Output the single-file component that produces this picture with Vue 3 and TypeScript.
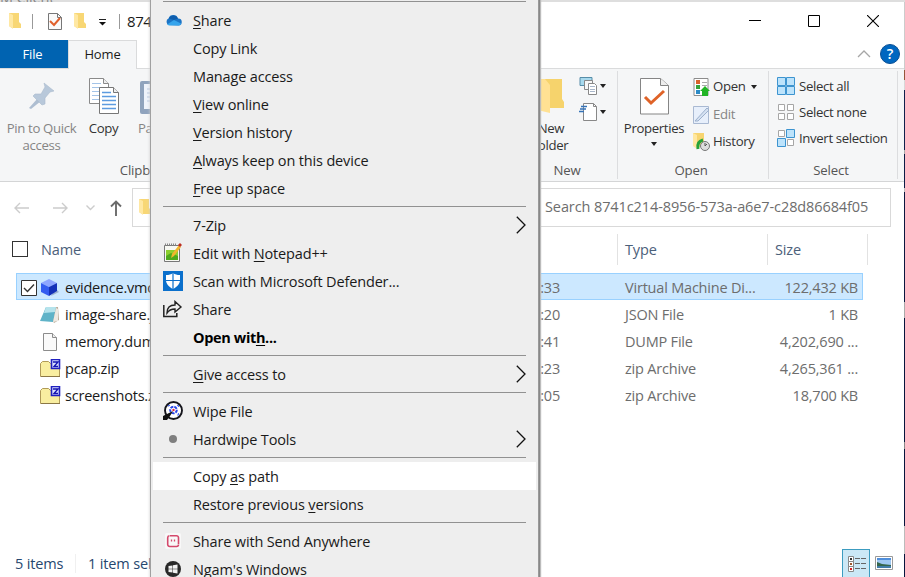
<script setup lang="ts">
type MenuEntry =
  | { kind: 'line' }
  | { kind: 'item'; before?: string; key?: string; after?: string; icon?: string; sub?: boolean; bold?: boolean; hot?: boolean }

interface FileRow {
  name: string
  time: string
  type: string
  size: string
  icon: 'cube' | 'note' | 'page' | 'zip'
  selected?: boolean
}

const line: MenuEntry = { kind: 'line' }

const menu: MenuEntry[] = [
  line,
  { kind: 'item', key: 'S', after: 'hare', icon: 'cloud' },
  { kind: 'item', before: 'Copy Link' },
  { kind: 'item', before: 'Manage access' },
  { kind: 'item', key: 'V', after: 'iew online' },
  { kind: 'item', key: 'V', after: 'ersion history' },
  { kind: 'item', key: 'A', after: 'lways keep on this device' },
  { kind: 'item', key: 'F', after: 'ree up space' },
  line,
  { kind: 'item', before: '7-Zip', sub: true },
  { kind: 'item', before: 'Edit with ', key: 'N', after: 'otepad++', icon: 'notepad' },
  { kind: 'item', before: 'Scan with Microsoft Defender...', icon: 'shield' },
  { kind: 'item', before: 'Share', icon: 'share' },
  { kind: 'item', before: 'Open wit', key: 'h', after: '...', bold: true },
  line,
  { kind: 'item', key: 'G', after: 'ive access to', sub: true },
  line,
  { kind: 'item', before: 'Wipe File', icon: 'wipe' },
  { kind: 'item', before: 'Hardwipe Tools', icon: 'dot', sub: true },
  line,
  { kind: 'item', before: 'Copy ', key: 'a', after: 's path', hot: true },
  { kind: 'item', before: 'Restore previous ', key: 'v', after: 'ersions' },
  line,
  { kind: 'item', before: 'Share with Send Anywhere', icon: 'send' },
  { kind: 'item', before: "Ngam's Windows", icon: 'windows' },
]

const files: FileRow[] = [
  { name: 'evidence.vmdk', time: '16:33', type: 'Virtual Machine Di...', size: '122,432 KB', icon: 'cube', selected: true },
  { name: 'image-share.json', time: '17:20', type: 'JSON File', size: '1 KB', icon: 'note' },
  { name: 'memory.dump', time: '19:41', type: 'DUMP File', size: '4,202,690 ...', icon: 'page' },
  { name: 'pcap.zip', time: '17:23', type: 'zip Archive', size: '4,265,361 ...', icon: 'zip' },
  { name: 'screenshots.zip', time: '17:05', type: 'zip Archive', size: '18,700 KB', icon: 'zip' },
]
</script>

<template>
  <div class="screen">
    <div class="behind"><span>M Client</span></div>
    <div class="window">
      <header class="titlebar">
        <svg class="tb-folder" width="14" height="18" viewBox="0 0 14 18"><path d="M1 1h10v9l2 2v4H4l-3-2z" fill="#f8d775" /><path d="M1 1l4 2v14l-4-3z" fill="#ffe8a3" /></svg>
        <i class="tick first" />
        <svg class="tb-check" width="16" height="19" viewBox="0 0 16 19"><path d="M1.500 1.500h9l4 4v12h-13z" fill="#fafafa" stroke="#777" /><path d="M10.500 1.500v4h4" fill="none" stroke="#777" /><path d="M3 9l4 4 6-7" fill="none" stroke="#e0602c" stroke-width="2" /></svg>
        <svg class="tb-folder second" width="14" height="18" viewBox="0 0 14 18"><path d="M1 1h10v9l2 2v4H4l-3-2z" fill="#f8d775" /><path d="M1 1l4 2v14l-4-3z" fill="#ffe8a3" /></svg>
        <svg class="tb-more" width="9" height="8" viewBox="0 0 9 8"><path d="M1 .500h7" stroke="#222" /><path d="M1 3h7L4.500 6.500z" fill="#111" /></svg>
        <i class="tick last" />
        <span class="title">8741c214</span>
        <div class="controls">
          <svg width="12" height="12" viewBox="0 0 12 12"><path d="M0 5.500h12" stroke="#000" /></svg>
          <svg width="12" height="12" viewBox="0 0 12 12"><path d="M.5.500h11v11H.5z" fill="none" stroke="#000" /></svg>
          <svg width="12" height="12" viewBox="0 0 12 12"><path d="M0 0l12 12M12 0L0 12" stroke="#000" stroke-width="1.100" /></svg>
        </div>
      </header>

      <nav class="tabs">
        <span class="tab file">File</span>
        <span class="tab home">Home</span>
        <svg class="fold" width="14" height="8" viewBox="0 0 14 8"><path d="M1 7l6-6 6 6" fill="none" stroke="#a6a6a6" stroke-width="1.300" /></svg>
        <span class="help">?</span>
      </nav>

      <section class="ribbon">
        <div class="group clipboard">
          <div class="big pin">
            <svg width="28" height="28" viewBox="0 0 28 28"><path d="M1 26l9-10 3 3-10 8z" fill="#aebed1" /><path d="M16 1l10 8-4 1-5 6 0 6-3 1L5 14l2-2 6 0 4-7z" fill="#b8c8da" stroke="#a9bacd" stroke-width=".6" /></svg>
            <span class="muted">Pin to Quick<br />access</span>
          </div>
          <div class="big copy">
            <svg width="32" height="38" viewBox="0 0 32 38"><path d="M1.500 1.500h14l5 5v20h-19z" fill="#fff" stroke="#8a8a8a" /><path d="M15.500 1.500v5h5" fill="#eee" stroke="#8a8a8a" /><path d="M4 6.500h9M4 10.500h14M4 14.500h14M4 18.500h14M4 22.500h14" stroke="#a4c4e8" /><path d="M11.500 10.500h14l5 5v21h-19z" fill="#fff" stroke="#777" /><path d="M25.500 10.500v5h5" fill="#eee" stroke="#777" /><path d="M14 15.500h9M14 19.500h14M14 23.500h14M14 27.500h14M14 31.500h14" stroke="#5c9be0" stroke-width="1.300" /></svg>
            <span>Copy</span>
          </div>
          <div class="big paste">
            <svg width="32" height="36" viewBox="0 0 32 36"><rect x="0" y="2" width="31" height="33" rx="2" fill="#8fa3bd" /><path d="M4 5h23v25H4z" fill="#eef3fb" /><path d="M7 10h17M7 14h17M7 18h17M7 22h17" stroke="#b9c9e0" /></svg>
            <span class="muted">Paste</span>
          </div>
          <span class="caption">Clipboard</span>
        </div>
        <div class="group new">
          <div class="big folder">
            <svg width="40" height="36" viewBox="0 0 40 36"><path d="M2 1h33v20l2 3v6H8z" fill="#f6d36c" /><path d="M2 1h16l5 6v28L2 30z" fill="#ffe193" /></svg>
            <span>New<br />folder</span>
          </div>
          <div class="mini">
            <span><svg width="19" height="19" viewBox="0 0 19 19"><path d="M1 1.500h12v8H1z" fill="#a8d9ed" stroke="#568da8" /><path d="M5.500 4.500h8v9h-8z" fill="#f7f7f7" stroke="#888" /><path d="M9.500 7.500h6l2 2v9h-8z" fill="#fff" stroke="#888" /><path d="M11 10.500h5M11 13.500h5M11 15.500h5" stroke="#a9b7ca" /></svg><i class="caret" /></span>
            <span><svg width="19" height="19" viewBox="0 0 19 19"><path d="M4.500 1.500h10l3 3v14h-13z" fill="#fff" stroke="#888" /><path d="M14.500 1.500v3h3" fill="none" stroke="#888" /><path d="M2 4.500h6M1 7h6M0 9.500h5" stroke="#3673b8" stroke-width="1.400" /></svg><i class="caret" /></span>
          </div>
          <span class="caption">New</span>
        </div>
        <div class="group open">
          <div class="big props">
            <svg width="29" height="37" viewBox="0 0 29 37"><path d="M.5.500h20l8 7v28.500H.5z" fill="#fff" stroke="#858585" /><path d="M20.500.500v7h8" fill="#eee" stroke="#858585" /><path d="M5 19l6 6L24 13" fill="none" stroke="#df6328" stroke-width="3" /></svg>
            <span>Properties</span>
            <i class="caret" />
          </div>
          <div class="list">
            <span><svg width="17" height="20" viewBox="0 0 17 20"><path d="M1 1.500h14v17H1z" fill="#fff" stroke="#8c8c8c" /><path d="M3 3h4v4H3z" fill="#d9622b" /><path d="M3 8h4v4H3z" fill="#35a23a" /><path d="M3 13h4v4H3z" fill="#2b8ac6" /><path d="M9 5.500h5M9 8.500h5" stroke="#aaa" /><path d="M12 9l5 5h-2v5H9v-5H7z" fill="#21b425" /></svg>Open<i class="caret" /></span>
            <span class="muted"><svg width="17" height="19" viewBox="0 0 17 19"><path d="M.5 1.500h15v17H.5z" fill="#e7effb" stroke="#a9b9d2" /><path d="M2 16L14 3l2 2L5 16z" fill="#d5e1f1" stroke="#9db1cd" /></svg>Edit</span>
            <span><svg width="17" height="20" viewBox="0 0 17 20"><path d="M0 1h11v14H4l-4-2z" fill="#f7d470" /><path d="M0 1l4 2v14l-4-3z" fill="#ffe7a0" /><path d="M5 17c-1-5 1-8 5-9" fill="none" stroke="#24a33a" stroke-width="3" /><circle cx="12" cy="14" r="4.500" fill="#ddd" stroke="#777" /><path d="M12 11v3l2-2" fill="none" stroke="#555" /></svg>History</span>
          </div>
          <span class="caption">Open</span>
        </div>
        <div class="group select">
          <div class="list">
            <span><svg width="18" height="18" viewBox="0 0 18 18"><path d="M.5.500h8v8h-8zM9.500.500h8v8h-8zM.5 9.500h8v8h-8zM9.500 9.500h8v8h-8z" fill="#bde3fb" stroke="#3d94d0" /></svg>Select all</span>
            <span><svg width="18" height="18" viewBox="0 0 18 18"><path d="M1.500 1.500h6v6h-6zM10.500 1.500h6v6h-6zM1.500 10.500h6v6h-6zM10.500 10.500h6v6h-6z" fill="#fff" stroke="#a6a6a6" /></svg>Select none</span>
            <span><svg width="18" height="18" viewBox="0 0 18 18"><path d="M1.500 1.500h6v6h-6zM10.500 10.500h6v6h-6z" fill="#fff" stroke="#a6a6a6" /><path d="M9.500.500h8v8h-8zM.5 9.500h8v8h-8z" fill="#bde3fb" stroke="#3d94d0" /></svg>Invert selection</span>
          </div>
          <span class="caption">Select</span>
        </div>
      </section>

      <div class="address">
        <svg class="back" width="15" height="12" viewBox="0 0 15 12"><path d="M15 6H1M6 1L1 6l5 5" fill="none" stroke="#ccc" stroke-width="1.400" /></svg>
        <svg class="fwd" width="15" height="12" viewBox="0 0 15 12"><path d="M0 6h14M9 1l5 5-5 5" fill="none" stroke="#ccc" stroke-width="1.400" /></svg>
        <svg class="recent" width="9" height="6" viewBox="0 0 9 6"><path d="M.5.500l4 4 4-4" fill="none" stroke="#ccc" stroke-width="1.400" /></svg>
        <svg class="up" width="12" height="16" viewBox="0 0 12 16"><path d="M6 16V1.500M1 6.500l5-5 5 5" fill="none" stroke="#6b6b6b" stroke-width="1.900" /></svg>
        <div class="path"><svg width="14" height="18" viewBox="0 0 14 18"><path d="M1 1h10v9l2 2v4H4l-3-2z" fill="#f8d775" /><path d="M1 1l4 2v14l-4-3z" fill="#ffe8a3" /></svg></div>
        <div class="search">Search 8741c214-8956-573a-a6e7-c28d86684f05</div>
      </div>

      <div class="heads">
        <i class="box" />
        <span class="h-name">Name</span>
        <span class="h-date">Date modified</span>
        <span class="h-type">Type</span>
        <span class="h-size">Size</span>
      </div>

      <main class="files">
        <div v-for="f in files" :key="f.name" class="row" :class="{ selected: f.selected }">
          <span class="pick"><svg v-if="f.selected" width="16" height="16" viewBox="0 0 16 16"><path d="M.5.500h15v15H.5z" fill="#fff" stroke="#333" /><path d="M3 8l3.500 3.500L13 4.500" fill="none" stroke="#333" stroke-width="1.400" /></svg></span>
          <span class="icon">
            <svg v-if="f.icon === 'cube'" width="20" height="20" viewBox="0 0 20 20"><path d="M11 18l8-4-3-3z" fill="#9ab0cf" /><path d="M9 1l8 4-8 4-8-4z" fill="#8ea6ff" /><path d="M1 5l8 4v9l-8-4z" fill="#345cf0" /><path d="M17 5L9 9v9l8-5z" fill="#1431b8" /></svg>
            <svg v-else-if="f.icon === 'note'" width="20" height="18" viewBox="0 0 20 18"><path d="M6 2l12-1 1 13-5 3z" fill="#b8aa98" /><path d="M6 1h10l-3 15-13-1z" fill="#5fb3c8" /><path d="M6 1h10l-1 5L4 7z" fill="#b5e3ec" /><path d="M16 2l2 1v12l-5 1z" fill="#eee9e2" /></svg>
            <svg v-else-if="f.icon === 'page'" width="20" height="20" viewBox="0 0 20 20"><path d="M3.500 1.500h9l4 4v13h-13z" fill="#fafafa" stroke="#8c8c8c" /><path d="M12.500 1.500v4h4" fill="#eee" stroke="#8c8c8c" /></svg>
            <svg v-else width="21" height="19" viewBox="0 0 21 19"><path d="M.5 17.500v-13l2-2h6l2 2h9v13z" fill="#f9eea0" stroke="#b09a58" /><path d="M1 17.500h19" stroke="#8b7746" /><path d="M11.500.500h8v9h-8z" fill="#dce2ff" stroke="#2020c0" stroke-width="1.600" /><path d="M13 3h5l-4 4.500h4" fill="none" stroke="#1414b0" stroke-width="1.400" /></svg>
          </span>
          <span class="name">{{ f.name }}</span>
          <span class="time">{{ f.time }}</span>
          <span class="type">{{ f.type }}</span>
          <span class="size">{{ f.size }}</span>
        </div>
      </main>

      <footer class="status">
        <span class="count">5 items</span>
        <span class="chosen">1 item selected</span>
        <div class="view on"><svg width="19" height="18" viewBox="0 0 19 18"><path d="M1.500 1.500h5v5h-5zM1.500 6.500h5v5h-5zM1.500 11.500h5v5h-5z" fill="#fff" stroke="#888" /><path d="M3 3h2v2H3z" fill="#333" /><path d="M3 8h2v2H3z" fill="#a05b30" /><path d="M3 13h2v2H3z" fill="#d02020" /><path d="M8 3.500h5M14 3.500h5M8 8.500h5M14 8.500h5M8 13.500h5M14 13.500h5" stroke="#666" /></svg></div>
        <div class="view"><svg width="18" height="14" viewBox="0 0 18 14"><path d="M.5.500h17v13H.5z" fill="#fff" stroke="#999" /><path d="M2 2h14v10H2z" fill="#9fc8f2" /><path d="M2 2h14v2H2z" fill="#4f8edb" /><path d="M2 6l5 2 9 1v1H2z" fill="#35664c" /><path d="M2 10h14v2H2z" fill="#417ca8" /></svg></div>
      </footer>
    </div>
    <div class="desktop" />

    <div class="menu">
      <template v-for="(m, i) in menu" :key="i">
        <div v-if="m.kind === 'line'" class="rule" />
        <div v-else class="item" :class="{ bold: m.bold, hot: m.hot }">
          <span class="glyph">
            <svg v-if="m.icon === 'cloud'" width="17" height="11" viewBox="0 0 17 11"><path d="M4 10a3.500 3.500 0 0 1-.5-6.500A5 5 0 0 1 13 3.500a3.500 3.500 0 0 1 .5 7z" fill="#1b74c5" /><path d="M2 9.500L9 5l7 3.500c0 1-1 2-2.500 2H4z" fill="#35a4ec" /><path d="M4 3.500L9 5l4-1.500A5 5 0 0 0 4 3z" fill="#0f5ead" /></svg>
            <svg v-else-if="m.icon === 'notepad'" width="20" height="20" viewBox="0 0 20 20"><path d="M1.500 2.500h15v16h-15z" fill="#f7f8f2" stroke="#777" /><path d="M3 7h12v10H3z" fill="#8ccf2e" /><path d="M3 13l5-3 7 3v4H3z" fill="#4faa1c" /><path d="M2 1.500h12" stroke="#888" stroke-dasharray="1 1" stroke-width="2" /><path d="M8 15l1-4 7-9 2 2-7 9z" fill="#f3b62d" /><path d="M15 2l2-2 2 2-2 2z" fill="#bb2e22" /></svg>
            <svg v-else-if="m.icon === 'shield'" width="20" height="20" viewBox="0 0 20 20"><path d="M0 0h20v20H0z" fill="#0b70cc" /><path d="M10 2c2 1.500 4 2 7 2v5c0 4-3 7-7 9-4-2-7-5-7-9V4c3 0 5-.5 7-2z" fill="#fff" /><path d="M10 2v16M3 9.500h14" stroke="#0b70cc" stroke-width="1.200" /></svg>
            <svg v-else-if="m.icon === 'share'" width="20" height="18" viewBox="0 0 20 18"><path d="M.8 5v11.500h13V13" fill="none" stroke="#222" stroke-width="1.500" /><path d="M4 13c0-5 3-8 8-8V1.500l6 5.500-6 5V9c-4 0-6 1-8 4z" fill="#eee" stroke="#222" stroke-width="1.400" /></svg>
            <svg v-else-if="m.icon === 'wipe'" width="20" height="20" viewBox="0 0 20 20"><circle cx="10.500" cy="9.500" r="8.500" fill="#fff" stroke="#15151c" stroke-width="1.900" /><circle cx="10.500" cy="9" r="3.300" fill="none" stroke="#2745e8" stroke-width="2" stroke-dasharray="3 1" /><path d="M5.500 5.500V4.500h1.500M14 4.500h1.500V6M15.500 12v2H14" fill="none" stroke="#5470f0" stroke-width="1.200" /><circle cx="10.500" cy="9" r="1.200" fill="#dc2840" /><path d="M10 10l-3 5-3 4H0v-4z" fill="#111" /></svg>
            <svg v-else-if="m.icon === 'dot'" width="8" height="8" viewBox="0 0 8 8"><circle cx="4" cy="4" r="4" fill="#7f7f7f" /></svg>
            <svg v-else-if="m.icon === 'send'" width="16" height="16" viewBox="0 0 16 16"><rect width="16" height="16" rx="2" fill="#f8f8f8" /><path d="M5 2.700h6.500a2 2 0 0 1 2 2V11M2.700 11V4.700A2 2 0 0 1 4.500 2.700M2.700 9v2.500a2 2 0 0 0 2 2h6.800a2 2 0 0 0 2-2" fill="none" stroke="#d4486b" stroke-width="1.600" /><path d="M6.500 6.500v2M9.500 6.500v2" stroke="#d4486b" stroke-width="1.300" /></svg>
            <svg v-else-if="m.icon === 'windows'" width="16" height="16" viewBox="0 0 16 16"><circle cx="8" cy="8" r="8" fill="#292929" /><path d="M3.500 5l4-.6v3.300h-4zM8 4.300l4.500-.8v4.200H8zM3.500 8.200h4v3.400l-4-.6zM8 8.200h4.500v4.200L8 11.700z" fill="#f2f2f2" /></svg>
          </span>
          <span class="label">{{ m.before }}<u v-if="m.key">{{ m.key }}</u>{{ m.after }}</span>
          <svg v-if="m.sub" class="arrow" width="10" height="18" viewBox="0 0 10 18"><path d="M.8.800L9 9 .8 17.200" fill="none" stroke="#111" stroke-width="1.300" /></svg>
        </div>
      </template>
    </div>
  </div>
</template>

<style>
body {
  margin: 0;
  overflow: hidden;
}
</style>

<style scoped>
* {
  box-sizing: border-box;
}
svg {
  display: block;
  flex: none;
}
.screen {
  position: relative;
  width: 905px;
  height: 577px;
  overflow: hidden;
  background: #fff;
  font-family: 'Open Sans', 'Noto Sans', sans-serif;
  font-size: 14.500px;
  letter-spacing: -0.150px;
  white-space: nowrap;
  color: #1a1a1a;
  display: grid;
  grid-template: 2px 575px / 904px 1px;
}
.behind {
  grid-column: 1 / 3;
  background: #dedede;
  overflow: hidden;
  display: flex;
  align-items: flex-end;
  line-height: 8px;
  color: #888;
}
.window {
  display: flex;
  flex-direction: column;
  min-width: 0;
  background: #fff;
}
.desktop {
  background: linear-gradient(#ccc 0 68px, #96553a 68px 78px, #d8d8d8 78px 88px, #10204c 88px 148px, #aaa 148px 152px, #0c1c46 152px 186px, #bbb 186px 190px, #0b1740 190px 300px, #aaa 300px 316px, #07153d 316px 440px, #888 440px 447px, #07153d 447px 524px, #bbb 524px 552px, #07153d 552px);
}
.titlebar {
  height: 38px;
  display: flex;
  align-items: center;
  padding-left: 8px;
}
.tick {
  width: 1px;
  height: 15px;
  background: #999;
}
.tick.first {
  margin-left: 10px;
}
.tick.last {
  margin-left: 12px;
}
.tb-check {
  margin-left: 14px;
}
.tb-folder.second {
  margin-left: 10px;
}
.tb-more {
  margin: 4px 0 0 11px;
}
.title {
  margin-left: 7px;
  font-size: 15px;
  letter-spacing: -0.400px;
}
.controls {
  margin-left: auto;
  margin-right: 25px;
  display: flex;
  gap: 47px;
}
.tabs {
  height: 28px;
  display: flex;
  align-items: center;
}
.tab {
  height: 28px;
  line-height: 28px;
  text-align: center;
  font-size: 13px;
}
.file {
  width: 68px;
  background: #0063b1;
  color: #fff;
  padding-right: 3px;
}
.home {
  width: 69px;
  height: 29px;
  line-height: 27px;
  align-self: flex-start;
  background: #f5f6f7;
  border: 1px solid #dadbdc;
  border-bottom: 0;
  position: relative;
  z-index: 1;
}
.fold {
  margin-left: auto;
}
.help {
  width: 20px;
  height: 20px;
  margin: 0 4px 0 9px;
  border-radius: 50%;
  background: #0067c0;
  border: 1px solid #0a4f94;
  color: #fff;
  font-weight: 600;
  text-align: center;
  line-height: 18px;
}
.ribbon {
  height: 114px;
  display: flex;
  background: #f5f6f7;
  border-top: 1px solid #dadbdc;
  border-bottom: 1px solid #d4d5d6;
  font-size: 13.200px;
  letter-spacing: -0.350px;
  line-height: 17px;
  color: #333;
  padding: 2px 0;
}
.group {
  display: grid;
  grid-template-rows: 91px 18px;
  align-content: start;
  border-right: 1px solid #dcdddf;
}
.clipboard {
  width: 299px;
  grid-template-columns: 83px 41px 1fr;
}
.new {
  width: 101px;
  margin-left: 218px;
  grid-template-columns: 59px 1fr;
}
.open {
  width: 151px;
  grid-template-columns: 72px 1fr;
}
.select {
  width: 129px;
}
.caption {
  grid-column: 1 / -1;
  text-align: center;
  color: #555;
  letter-spacing: -0.150px;
}
.open .caption,
.select .caption {
  padding-right: 4px;
}
.big {
  display: flex;
  flex-direction: column;
  align-items: center;
  text-align: center;
}
.big > span {
  display: block;
}
.pin {
  padding-top: 11px;
}
.pin > span {
  margin-top: 10px;
}
.copy {
  padding-top: 6px;
}
.copy > span,
.paste > span {
  margin-top: 5px;
}
.paste {
  padding-top: 8px;
  align-items: flex-start;
  padding-left: 16px;
}
.paste > span {
  margin-left: -2px;
}
.folder {
  padding-top: 7px;
}
.folder > span {
  margin: 6px 0 0 9px;
}
.props {
  padding-top: 7px;
}
.props > span {
  margin-top: 5px;
}
.props .caret {
  margin: 5px 0 0;
}
.muted {
  color: #858585;
}
.caret {
  width: 0;
  height: 0;
  margin-left: 6px;
  border: 3.500px solid transparent;
  border-top: 4px solid #222;
  border-bottom: 0;
}
.mini {
  padding-top: 5px;
  display: flex;
  flex-direction: column;
  gap: 7px;
  padding-left: 3px;
}
.mini > span {
  display: flex;
  align-items: center;
}
.mini .caret {
  margin-left: 2px;
}
.list {
  display: flex;
  flex-direction: column;
  padding: 2px 0 0 3px;
}
.list > span {
  height: 27.500px;
  display: flex;
  align-items: center;
  gap: 3px;
}
.list .caret {
  margin-left: 3px;
}
.select .list {
  padding: 2px 0 0 8px;
}
.select .list > span {
  height: 26px;
  gap: 4px;
}
.address {
  height: 52px;
  display: flex;
  align-items: center;
  padding-bottom: 1px;
}
.back {
  margin-left: 14px;
}
.fwd {
  margin-left: 24px;
}
.recent {
  margin-left: 18px;
}
.up {
  margin-left: 15px;
}
.path {
  width: 370px;
  height: 39px;
  margin: -1px 0 0 10px;
  padding: 9px 5px;
  border: 1px solid #d9d9d9;
}
.search {
  width: 361px;
  height: 39px;
  margin: -1px 0 0 28px;
  padding-left: 14px;
  border: 1px solid #d9d9d9;
  line-height: 36px;
  letter-spacing: -0.100px;
  color: #6d6d6d;
}
.heads {
  height: 30px;
  display: grid;
  grid-template-columns: 41px 400px 177px 150px 100px;
  color: #4c607a;
  line-height: 31px;
}
.box {
  width: 16px;
  height: 16px;
  margin: 7px 0 0 12px;
  border: 1px solid #333;
}
.heads span + span {
  border-right: 1px solid #e2e2e2;
  padding-left: 7px;
}
.heads .h-date {
  padding-left: 5px;
}
.files {
  margin-top: 9px;
  padding-left: 16px;
  flex: 1;
}
.row {
  width: 847px;
  height: 27px;
  display: grid;
  grid-template-columns: 24px 25px 459px 101px 127px 1fr;
  align-items: center;
  color: #6d6d6d;
  line-height: 29px;
  letter-spacing: -0.200px;
}
.row.selected {
  background: #cce8ff;
  box-shadow: inset 0 0 0 1px #99d1ff;
}
.pick {
  padding-left: 5px;
}
.name {
  color: #1a1a1a;
}
.size {
  text-align: right;
  padding-right: 5px;
}
.status {
  height: 28px;
  display: flex;
  align-items: center;
  color: #26476e;
}
.count {
  width: 76px;
  padding-left: 15px;
  border-right: 1px solid #f0f0f0;
}
.chosen {
  padding-left: 12px;
  margin-right: auto;
}
.view {
  width: 28px;
  height: 28px;
  display: grid;
  place-items: center;
}
.view:last-child {
  margin-right: 6px;
}
.view.on {
  background: #cbe8f6;
  border: 1px solid #3c9cc0;
  border-bottom: 0;
}
.menu {
  position: absolute;
  left: 150px;
  top: -3px;
  width: 389px;
  height: 590px;
  background: #eee;
  border-left: 1px solid #a0a0a0;
  border-right: 1px solid #999;
  box-shadow: 1px 0 0 #888, 2px 0 1px #bbb, 0 0 3px #ccc;
}
.rule {
  height: 1px;
  margin: 4px 12px;
  background: #919191;
}
.item {
  height: 28px;
  margin: 0 2px;
  display: flex;
  align-items: center;
}
.item.hot {
  background: #fff;
}
.item.bold {
  font-weight: 700;
  color: #000;
  letter-spacing: -0.350px;
}
.glyph {
  width: 20px;
  margin: 0 10px;
  display: grid;
  place-items: center;
}
.arrow {
  margin: 0 10px 0 auto;
}
u {
  text-underline-offset: 2px;
  text-decoration-thickness: 1px;
}
</style>
